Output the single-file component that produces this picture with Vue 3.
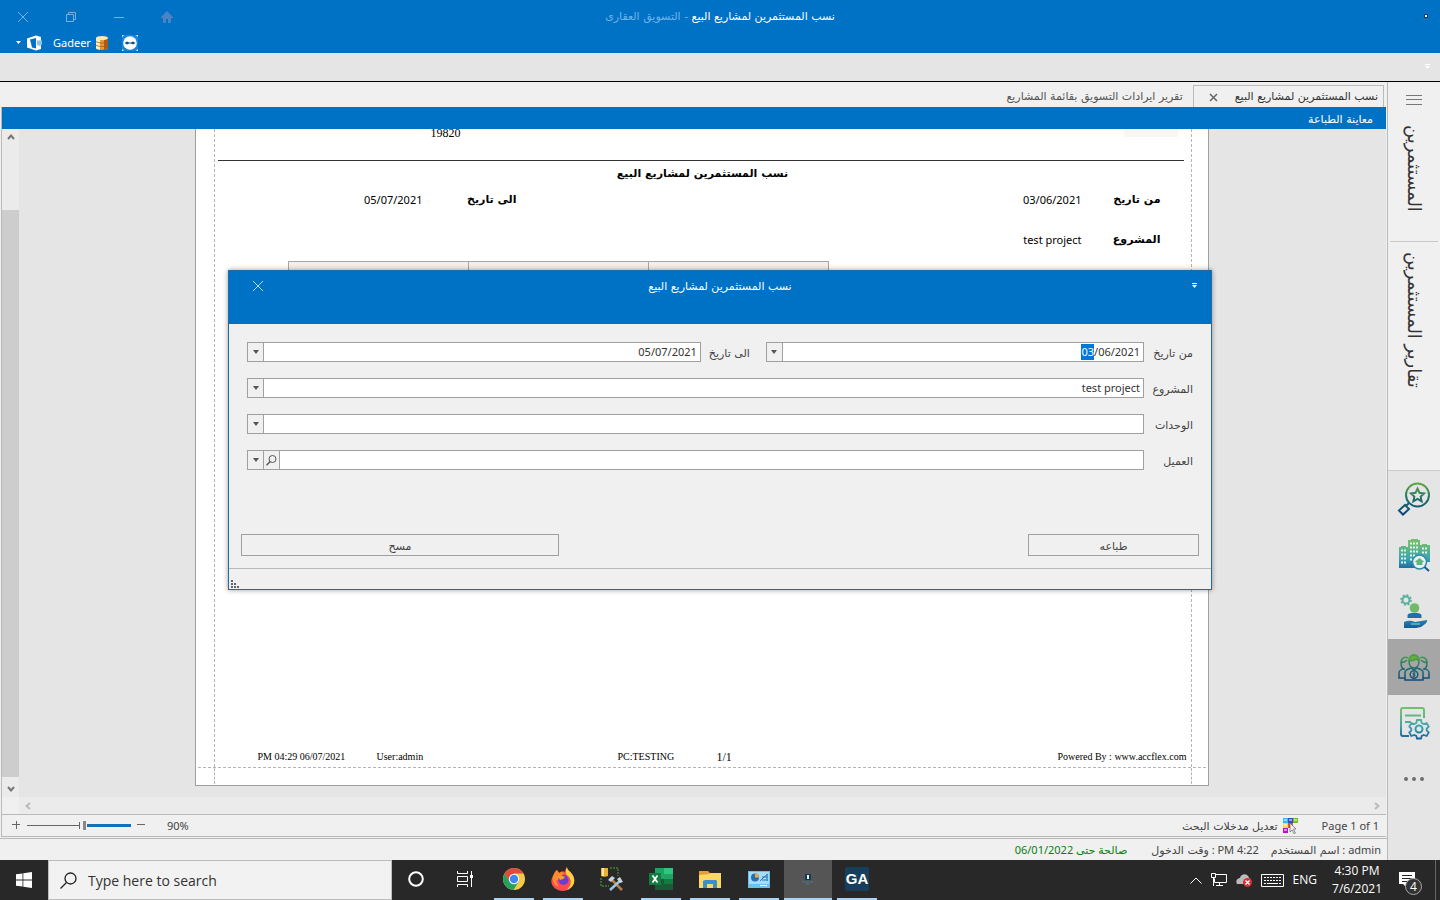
<script setup>
import { ref, onMounted } from "vue";

const fromDate = ref("03/06/2021");
const toDate = ref("05/07/2021");
const project = ref("test project");
const unit = ref("");
const client = ref("");
const fromInput = ref(null);
const zoom = ref(90);

const clearForm = () => {
  project.value = "";
  unit.value = "";
  client.value = "";
};

const printReport = () => {
  window.print();
};

// the day part is selected first, like in the desktop date editor
onMounted(() => {
  fromInput.value.focus();
  fromInput.value.setSelectionRange(0, 2);
});
</script>

<template>
  <div class="screen">
    <div class="desktop">
      <header class="titlebar">
        <div class="title-row">
          <div class="window-buttons">
            <button aria-label="Close">
              <svg width="12" height="12" viewBox="0 0 12 12"><path d="M1 1l10 10M11 1L1 11" /></svg>
            </button>
            <button aria-label="Restore">
              <svg width="12" height="12" viewBox="0 0 12 12"><path d="M1.500 3.500h7v7h-7zM3.500 3.500v-2h7v7h-2" /></svg>
            </button>
            <button aria-label="Minimize">
              <svg width="12" height="12" viewBox="0 0 12 12"><path d="M1 6.500h10" /></svg>
            </button>
            <button aria-label="Home">
              <svg width="12" height="12" viewBox="0 0 12 12"><path class="home" d="M6 0L12 6v1h-2v5H7V8H5v4H2V7H0V6z" /></svg>
            </button>
          </div>
          <h1 dir="rtl">نسب المستثمرين لمشاريع البيع <span>- التسويق العقارى</span></h1>
          <svg class="app-mark" width="8" height="6" viewBox="0 0 8 6"><path d="M2 0h4v4H2z" fill="#123f63" /><path d="M3 1h2v2H3z" fill="#fff" /><path d="M0 5.500h7" stroke="#2b6fa5" /></svg>
        </div>
        <div class="quick-row">
          <svg width="6" height="4" viewBox="0 0 6 4"><path d="M0 0h5L2.500 3z" fill="#fff" /></svg>
          <svg width="16" height="16" viewBox="0 0 16 16">
            <path d="M0 3.500L9 .5 14 2v12l-5 1.500L0 12.500z" fill="#fff" />
            <path d="M3 4.500l6-1.500v10.500L5 12.500z" fill="#0072c6" />
            <path d="M10 5.500h5v4l-2 1.500-3-1z" fill="#8cc2ea" />
          </svg>
          <span class="user">Gadeer</span>
          <svg width="12" height="14" viewBox="0 0 12 14">
            <path d="M0 2v10c0 2.500 12 2.500 12 0V2z" fill="#e59a3c" />
            <path d="M0 2v10c0 1 2 1.600 4 1.800V2z" fill="#fff0c0" />
            <path d="M8 2v11.700c2-.2 4-.8 4-1.700V2z" fill="#b8560f" />
            <ellipse cx="6" cy="2" rx="6" ry="2" fill="#ffe9ae" />
            <path d="M0 5.500c2 2 10 2 12 0M0 9c2 2 10 2 12 0" fill="none" stroke="#a65f17" stroke-width=".8" />
          </svg>
          <svg width="16" height="16" viewBox="0 0 16 16">
            <path d="M0 0h16v16H0z" fill="#1687e0" />
            <path d="M0 2V0h2M14 0h2v2M16 14v2h-2M2 16H0v-2" fill="none" stroke="#fff" />
            <circle cx="8" cy="8" r="6.800" fill="#fff" />
            <path d="M2.500 8L5 6.500l2 1h2l2-1L13.500 8 11 9.500l-2-1H7l-2 1z" fill="#0d4f8c" />
          </svg>
        </div>
      </header>

      <div class="ribbon">
        <svg width="6" height="6" viewBox="0 0 6 6"><path d="M0 .5h5" stroke="#fff" /><path d="M0 2h5L2.500 5z" fill="#fff" /></svg>
      </div>

      <div class="workspace">
        <main class="content">
          <nav class="tabs">
            <button class="tab" dir="rtl">تقرير ايرادات التسويق بقائمة المشاريع</button>
            <button class="tab active">
              <svg width="9" height="9" viewBox="0 0 9 9"><path d="M1 1l7 7M8 1L1 8" stroke="#666" stroke-width="1.500" /></svg>
              <span dir="rtl">نسب المستثمرين لمشاريع البيع</span>
            </button>
          </nav>

          <section class="preview">
            <h2 dir="rtl">معاينة الطباعة</h2>
            <div class="viewer">
              <div class="v-scroll">
                <svg width="8" height="6" viewBox="0 0 8 6"><path d="M1 5l3-3.500L7 5" /></svg>
                <div class="thumb"></div>
                <svg width="8" height="6" viewBox="0 0 8 6"><path d="M1 1l3 3.500L7 1" /></svg>
              </div>
              <div class="canvas">
                <article class="paper">
                  <div class="sheet">
                    <div class="report-head"><span>19820</span><i></i></div>
                    <h3 dir="rtl">نسب المستثمرين لمشاريع البيع</h3>
                    <dl class="criteria">
                      <div class="to">
                        <dt dir="rtl">الى تاريخ</dt>
                        <dd>05/07/2021</dd>
                      </div>
                      <div>
                        <dt dir="rtl">من تاريخ</dt>
                        <dd>03/06/2021</dd>
                      </div>
                      <div class="project">
                        <dt dir="rtl">المشروع</dt>
                        <dd>test project</dd>
                      </div>
                    </dl>
                    <div class="report-table"><i v-for="n in 3" :key="n"></i></div>
                    <footer class="report-foot">
                      <span>PM 04:29 06/07/2021</span>
                      <span>User:admin</span>
                      <span>PC:TESTING</span>
                      <span class="page-no">1/1</span>
                      <span>Powered By : www.accflex.com</span>
                    </footer>
                  </div>
                  <div class="bottom-margin"></div>
                </article>
              </div>
            </div>
            <div class="h-scroll">
              <svg width="6" height="8" viewBox="0 0 6 8"><path d="M5 1L1.500 4 5 7" /></svg>
              <svg width="6" height="8" viewBox="0 0 6 8"><path d="M1 1l3.500 3L1 7" /></svg>
            </div>
            <div class="zoom-bar">
              <button class="step" aria-label="Zoom in">
                <svg width="8" height="8" viewBox="0 0 8 8"><path d="M0 3.500h8M4.500 0v8" /></svg>
              </button>
              <input v-model="zoom" class="slider" dir="rtl" type="range" min="10" max="190" aria-label="Zoom" />
              <button class="step" aria-label="Zoom out">
                <svg width="8" height="8" viewBox="0 0 8 8"><path d="M0 3.500h8" /></svg>
              </button>
              <span class="percent">{{ zoom }}%</span>
              <button class="edit-search">
                <span dir="rtl">تعديل مدخلات البحث</span>
                <svg width="16" height="16" viewBox="0 0 16 16">
                  <path d="M0 0h5v5H0z" fill="#39b6ee" />
                  <path d="M5 0h5v5H5z" fill="#3948b8" />
                  <path d="M10 0h5v5h-5z" fill="#79bd1d" />
                  <path d="M0 5h5v5H0z" fill="#ffd84a" />
                  <path d="M5 5h5v5H5z" fill="#e8502e" />
                  <path d="M0 10h5v5H0z" fill="#b414d2" />
                  <path d="M1 1h3v2H1zM6 1h3v2H6zM11 1h3v2h-3zM1 6h3v2H1zM1 11h3v2H1z" fill="#fff" opacity=".5" />
                  <path d="M7 5l6 6-2.500.2 2 3.800-1.500.8-1.800-3.800L7 14z" fill="#eee" stroke="#666" stroke-width=".7" />
                </svg>
              </button>
              <span class="page-count">Page 1 of 1</span>
            </div>
          </section>

          <footer class="status">
            <span class="valid" dir="rtl">صالحة حتى 06/01/2022</span>
            <span><bdi>وقت الدخول</bdi> : PM 4:22</span>
            <span class="who"><bdi>اسم المستخدم</bdi> : admin</span>
          </footer>
        </main>

        <aside class="sidebar">
          <button class="menu" aria-label="Menu">
            <svg width="16" height="10" viewBox="0 0 16 10"><path d="M0 .5h16M0 4.500h16M0 9.500h16" stroke="#777" /></svg>
          </button>
          <a class="side-link first" href="#" dir="rtl">المستثمرين</a>
          <a class="side-link" href="#" dir="rtl">تقارير المستثمرين</a>
          <div class="modules">
            <button aria-label="Favorites">
              <svg width="34" height="34" viewBox="0 0 34 34" fill="none" stroke="url(#gb)" stroke-width="2">
                <defs>
                  <linearGradient id="gb" x1="0" y1="0" x2="0" y2="34" gradientUnits="userSpaceOnUse">
                    <stop offset="0" stop-color="#5fae3c" />
                    <stop offset=".5" stop-color="#20706c" />
                    <stop offset="1" stop-color="#0d3f7c" />
                  </linearGradient>
                  <linearGradient id="lb" x1="0" y1="0" x2="0" y2="34" gradientUnits="userSpaceOnUse">
                    <stop offset=".15" stop-color="#70bf70" />
                    <stop offset=".6" stop-color="#3fa4b0" />
                    <stop offset="1" stop-color="#105a9c" />
                  </linearGradient>
                </defs>
                <circle cx="20.500" cy="13" r="11.500" />
                <path d="M20.500 6.500l2 4.300 4.600.6-3.400 3.200.9 4.600-4.100-2.300-4.100 2.300.9-4.600-3.400-3.200 4.600-.6z" />
                <path d="M12 21l-3 3M8 23l4 4-6 5.500-4-4z" />
              </svg>
            </button>
            <button aria-label="Projects">
              <svg width="34" height="34" viewBox="0 0 34 34">
                <path d="M2 9h2V8h5v1h2V2h3V1h7v1h2v5h2V6h5v1h3v17H22v6H2z" fill="url(#lb)" />
                <path d="M4 12.500h6M4 16.500h6M4 20.500h6M4 24.500h6M13 5.500h9M13 9.500h9M13 13.500h9M13 17.500h5M13 21.500h2M25 10.500h6M25 14.500h6" stroke="#e5f3ee" stroke-width="2" stroke-dasharray="2 1" />
                <circle cx="22.500" cy="24" r="7" fill="#eaf4f2" stroke="#2d8ab0" stroke-width="1.500" />
                <path d="M27.500 29l4.500 4" stroke="#105a9c" stroke-width="2" />
                <path d="M17.500 24l5-4 5 4h-2v3h-6v-3z" fill="#62b580" />
              </svg>
            </button>
            <button aria-label="Services">
              <svg width="34" height="34" viewBox="0 0 34 34" fill="none">
                <circle cx="9" cy="6" r="3.500" stroke="#58b596" stroke-width="2" />
                <circle cx="9" cy="6" r="5" stroke="#58a9a8" stroke-width="1.500" stroke-dasharray="2 1.900" />
                <circle cx="17.500" cy="14" r="4.800" fill="#70bb68" />
                <path d="M10.500 24v-2c0-3 3-3 7-3s7 0 7 3v2z" fill="#1e70ab" />
                <path d="M7 28c4-2 8-1 11 0l12-2c1 2-3 5-6 7-7 2-11 1-17 1z" fill="url(#lb)" />
                <path d="M14 30h9" stroke="#9cd5cb" />
              </svg>
            </button>
            <button class="current" aria-label="Investors">
              <svg width="34" height="34" viewBox="0 0 34 34" fill="none" stroke="url(#gb)" stroke-width="1.500">
                <path d="M12 11c0-8 10-8 10 0 0 4-2 7-5 7s-5-3-5-7z" />
                <path d="M12 11c0-8 10-8 10 0l-3-2c-2 2-5 2-7 2z" fill="#5fae3c" stroke="#4c9a4a" />
                <path d="M11 8c-3-2-7 0-7 5 0 4 2 6 4 6M23 8c3-2 7 0 7 5 0 4-2 6-4 6M4 12c2 1 4 0 6-2M30 12c-2 1-4 0-6-2" />
                <path d="M8 28H2v-5c0-2 2-4 5-4M26 28h6v-5c0-2-2-4-5-4M8 30v-8c0-2 3-3 6-4l3 2 3-2c3 1 6 2 6 4v8z" />
                <circle cx="17" cy="24.500" r="3.800" />
                <path d="M18.500 23h-2l-.8 1 2.500 1-.7 1.300h-2M17 21.500v6" stroke-width="1" />
              </svg>
            </button>
            <button aria-label="Reports">
              <svg width="34" height="34" viewBox="0 0 34 34" fill="none" stroke="url(#lb)" stroke-width="2">
                <path d="M27 12V4c0-2-1-2-2-2H6C5 2 4 3 4 4v24c0 2 1 2 2 2h6" />
                <path d="M8 9.500h16M8 16h6" />
                <circle cx="22" cy="23" r="3.500" />
                <path d="M20 14h4l.7 3 2 1 3-1 2 3.500-2 2v2l2 2-2 3.500-3-1-2 1-.7 2.500h-4l-.7-2.500-2-1-3 1-2-3.500 2-2v-2l-2-2 2-3.500 3 1 2-1z" stroke-width="1.800" />
              </svg>
            </button>
            <button aria-label="More">
              <svg width="20" height="4" viewBox="0 0 20 4" fill="#6e6e6e"><circle cx="2" cy="2" r="2" /><circle cx="10" cy="2" r="2" /><circle cx="18" cy="2" r="2" /></svg>
            </button>
          </div>
        </aside>
      </div>

      <div class="overlay">
        <form class="dialog" role="dialog" aria-labelledby="dialog-title" @submit.prevent="printReport">
          <header class="dialog-head">
            <button type="button" aria-label="Close">
              <svg width="12" height="12" viewBox="0 0 12 12"><path d="M1 1l10 10M11 1L1 11" /></svg>
            </button>
            <h2 id="dialog-title" dir="rtl">نسب المستثمرين لمشاريع البيع</h2>
            <svg width="6" height="6" viewBox="0 0 6 6"><path d="M0 .5h5" stroke="#fff" /><path d="M0 2h5L2.500 5z" fill="#fff" /></svg>
          </header>
          <div class="fields">
            <div class="dates">
              <div class="combo">
                <button type="button" class="drop" aria-label="Open calendar"></button>
                <input id="to-date" v-model="toDate" type="text" />
              </div>
              <label for="to-date" dir="rtl">الى تاريخ</label>
              <div class="combo from">
                <button type="button" class="drop" aria-label="Open calendar"></button>
                <input id="from-date" ref="fromInput" v-model="fromDate" type="text" />
              </div>
            </div>
            <label for="from-date" dir="rtl">من تاريخ</label>

            <div class="combo">
              <span class="drop over"></span>
              <select id="project" v-model="project">
                <option value=""></option>
                <option value="test project">test project</option>
              </select>
            </div>
            <label for="project" dir="rtl">المشروع</label>

            <div class="combo">
              <span class="drop over"></span>
              <select id="unit" v-model="unit">
                <option value=""></option>
              </select>
            </div>
            <label for="unit" dir="rtl">الوحدات</label>

            <div class="combo">
              <button type="button" class="drop" aria-label="Open list"></button>
              <button type="button" class="find" aria-label="Search">
                <svg width="11" height="11" viewBox="0 0 11 11"><circle cx="6.500" cy="4" r="3.500" /><path d="M4.200 6.500L.5 10.200" stroke-width="1.500" /></svg>
              </button>
              <input id="client" v-model="client" type="text" />
            </div>
            <label for="client" dir="rtl">العميل</label>
          </div>
          <div class="actions">
            <button type="button" class="clear" dir="rtl" @click="clearForm">مسح</button>
            <button type="submit" class="print" dir="rtl">طباعه</button>
          </div>
          <div class="dialog-foot">
            <svg width="8" height="8" viewBox="0 0 8 8" fill="#666"><path d="M0 0h2v2H0zM0 3h2v2H0zM3 3h2v2H3zM0 6h2v2H0zM3 6h2v2H3zM6 6h2v2H6z" /></svg>
          </div>
        </form>
      </div>
    </div>

    <div class="taskbar">
      <button class="start" aria-label="Start">
        <svg width="16" height="16" viewBox="0 0 16 16" fill="#fff"><path d="M0 2.300L6.500 1.400v6.200H0zM7.300 1.300L16 0v7.600H7.300zM0 8.400h6.500v6.200L0 13.700zM7.300 8.400H16V16l-8.700-1.300z" /></svg>
      </button>
      <label class="search">
        <svg width="17" height="17" viewBox="0 0 17 17" fill="none" stroke="#222" stroke-width="1.300"><circle cx="10.500" cy="6.500" r="5.500" /><path d="M6.500 10.500L.5 16.500" /></svg>
        <input type="text" placeholder="Type here to search" aria-label="Search" />
      </label>
      <div class="apps">
        <button aria-label="Cortana">
          <svg width="16" height="16" viewBox="0 0 16 16"><circle cx="8" cy="8" r="6.800" fill="none" stroke="#fff" stroke-width="2" /></svg>
        </button>
        <button aria-label="Task view">
          <svg width="16" height="16" viewBox="0 0 16 16" fill="none" stroke="#fff"><path d="M.5 0v2.500h10V0M.5 5.500h10v5H.5zM.5 16v-2.500h10V16M14.500 0v16" /><path d="M13 4h3v3h-3z" fill="#fff" stroke="none" /></svg>
        </button>
        <button class="open" aria-label="Chrome">
          <svg width="22" height="22" viewBox="0 0 22 22">
            <circle cx="11" cy="11" r="11" fill="#f6c945" />
            <path d="M1.500 5.500A11 11 0 0 1 20.500 5.500H11L6.200 13.700z" fill="#dc4c3e" />
            <path d="M1.500 5.500A11 11 0 0 0 10.500 22l5.200-8.500H6.300z" fill="#23a15d" />
            <circle cx="11" cy="11" r="5.200" fill="#fff" /><circle cx="11" cy="11" r="4.200" fill="#4086f4" />
          </svg>
        </button>
        <button class="open" aria-label="Firefox">
          <svg width="24" height="24" viewBox="0 0 24 24">
            <path d="M4 5l2-2 2 3c2-2 5-2 6-1 0-2 1-4 2-5 0 3 3 4 5 7 6 8-1 17-9 17S-3 17 2 9z" fill="#ff4a4f" />
            <path d="M16 0c0 3 3 4 5 7 5 7 1 14-5 16 5-6 5-11 0-15-2-2-1-6 0-8z" fill="#ffd43a" />
            <path d="M4 5l2-2 2 3c2-1 4-1 5 0l-4 5-4 3 3 6C2 18 1 13 2 9z" fill="#ff8b2b" />
            <circle cx="12.500" cy="13" r="5" fill="#6a3ed1" /><path d="M7 9c3-1 5 0 7 1-1 2-3 2-5 3z" fill="#ff9a2e" />
          </svg>
        </button>
        <button aria-label="Database tools">
          <svg width="24" height="24" viewBox="0 0 24 24" fill="none">
            <path d="M10 1h8v8M1 11v8h8" stroke="#4fa540" stroke-dasharray="2 1" />
            <path d="M1 1h7v8c-2 1-5 1-7 0z" fill="#e9b22b" /><path d="M2 1h2v8H2z" fill="#ffe9a0" />
            <path d="M10 11l12 12" stroke="#b87d45" stroke-width="2.500" /><path d="M21 13l-11 10" stroke="#9cc5df" stroke-width="2.500" />
            <path d="M8 13l4-4 3 2-4 4zM17 12l3-2 3 5-3 1z" fill="#c5d3dc" />
          </svg>
        </button>
        <button class="open" aria-label="Excel">
          <svg width="24" height="22" viewBox="0 0 24 22">
            <path d="M6 0h9v6H6z" fill="#21a366" /><path d="M15 0h9v6h-9z" fill="#33c481" /><path d="M6 6h18v5H6z" fill="#21a366" />
            <path d="M6 11h18v11H6z" fill="#185c37" /><path d="M15 11h9v5h-9z" fill="#107c41" /><path d="M0 5h12v12H0z" fill="#107c41" />
            <path d="M3.500 7.500l5 7M8.500 7.500l-5 7" stroke="#fff" stroke-width="1.800" />
          </svg>
        </button>
        <button class="open" aria-label="Files">
          <svg width="22" height="19" viewBox="0 0 22 19">
            <path d="M0 1h9l2 2h11v15H0z" fill="#e2a32d" /><path d="M0 5l11-1V3h11v15H0z" fill="#fcd667" />
            <path d="M4 18v-7l2-1h11l1 1v7h-4v-4H8v4z" fill="#3a8fd0" />
          </svg>
        </button>
        <button class="open" aria-label="Control panel">
          <svg width="22" height="17" viewBox="0 0 22 17">
            <path d="M0 0h22v17H0z" fill="#6dbfeb" /><path d="M1 1h20v12H1z" fill="#a5dcfa" />
            <circle cx="7" cy="6.500" r="4" fill="#2370b4" /><path d="M7 6.500V2.500a4 4 0 0 1 4 4z" fill="#f0a83b" />
            <path d="M12 10l3-3 5-4M14 6h6M14 9h6M19 3v7" stroke="#2a79b8" fill="none" /><path d="M3 14.500h8" stroke="#eaad3b" /><path d="M12 14.500h7" stroke="#fff" />
          </svg>
        </button>
        <button class="open selected" aria-label="AccFlex">
          <svg width="14" height="12" viewBox="0 0 14 12"><path d="M4 1h6v6H4z" fill="#123b54" /><path d="M6 2h2v4H6z" fill="#e4f0f6" /><path d="M1 9h12M5 11h4" stroke="#407fa3" stroke-dasharray="3 1" /></svg>
        </button>
        <button class="open" aria-label="GA">
          <span class="ga">GA</span>
        </button>
      </div>
      <div class="tray">
        <svg width="12" height="7" viewBox="0 0 12 7"><path d="M.5 6.500L6 1l5.500 5.500" /></svg>
        <svg width="16" height="14" viewBox="0 0 16 14"><path d="M5 1.500h10.500v8H3.500v-4M8.500 9.500v3M5 12.500h7M.5 .5h4v4h-4zM2.500 5v8" /></svg>
        <svg width="16" height="14" viewBox="0 0 16 14">
          <path d="M1 11C-1 7 2 5 4 5c1-5 8-5 9 0 3 1 3 5 1 6z" fill="#bbb" stroke="none" />
          <circle cx="11.500" cy="9.500" r="4.500" fill="#d32f36" stroke="none" /><path d="M9.500 7.500l4 4M13.500 7.500l-4 4" stroke-width="1.400" />
        </svg>
        <svg width="23" height="13" viewBox="0 0 23 13"><path d="M.5 .5h22v12H.5z" /><path d="M3 3.500h17M3 6.500h17" stroke-dasharray="2 1" /><path d="M3 9.500h2M6 9.500h11M18 9.500h2" /></svg>
        <span>ENG</span>
        <div class="clock">
          <span>4:30 PM</span>
          <span>7/6/2021</span>
        </div>
        <button class="notices" aria-label="Notifications">
          <svg width="16" height="16" viewBox="0 0 16 16"><path d="M0 0h16v12H8v4l-4-4H0z" fill="#fff" stroke="none" /><path d="M3 3.500h10M3 6.500h10M3 9.500h6" stroke="#262626" /></svg>
          <span class="count">4</span>
        </button>
      </div>
    </div>
  </div>
</template>

<style>
body {
  margin: 0;
}
</style>

<style scoped>
* {
  box-sizing: border-box;
}
.screen {
  display: flex;
  flex-direction: column;
  min-height: 100vh;
  font-family: "Noto Sans", "DejaVu Sans", sans-serif;
  font-size: 11px;
  line-height: 16px;
  color: #444;
}
[dir="rtl"],
bdi {
  font-family: "DejaVu Sans", "Noto Sans", sans-serif;
}
button {
  padding: 0;
  border: 0;
  background: none;
  font: inherit;
  color: inherit;
}
h1,
h2,
h3,
dl,
dd {
  margin: 0;
  font-size: 11px;
  font-weight: normal;
}
svg {
  flex: none;
  display: block;
}
.desktop {
  position: relative;
  flex: 1;
  display: flex;
  flex-direction: column;
  background: #f0f0f0;
}

/* main window title */
.titlebar {
  height: 53px;
  background: #0072c6;
  color: #fff;
}
.title-row {
  display: grid;
  grid-template-columns: 1fr auto 1fr;
  align-items: center;
  height: 33px;
  padding: 0 10px 0 17px;
}
h1 {
  margin-right: 7px;
}
.window-buttons {
  display: flex;
  gap: 36px;
}
.window-buttons path {
  fill: none;
  stroke: #73b2e3;
}
.window-buttons .home {
  fill: #4b83c4;
  stroke: none;
}
h1 span {
  color: #6fb3ea;
}
.app-mark {
  justify-self: end;
}
.quick-row {
  display: flex;
  align-items: center;
  height: 20px;
  padding-left: 16px;
  gap: 5px;
}
.user {
  margin-left: 5px;
}
.quick-row svg:last-child {
  margin-left: 9px;
}
.ribbon {
  display: flex;
  align-items: center;
  justify-content: flex-end;
  height: 29px;
  padding-right: 9px;
  background: #e5e5e5;
  border-bottom: 1px solid #000;
}

.workspace {
  flex: 1;
  display: flex;
}
.content {
  flex: 1;
  display: flex;
  flex-direction: column;
  min-width: 0;
}
.tabs {
  display: flex;
  justify-content: flex-end;
  align-items: flex-end;
  height: 25px;
  padding-right: 3px;
}
.tab {
  display: flex;
  align-items: center;
  height: 22px;
  padding: 2px 10px 0;
  color: #555;
}
.tab.active {
  gap: 17px;
  padding: 1px 5px 0 15px;
  border: 1px solid #bbb;
  border-bottom: 0;
  color: #333;
}
.preview {
  flex: 1;
  display: flex;
  flex-direction: column;
  margin: 0 1px 1px;
  border: 1px solid #b9b9b9;
  border-width: 0 0 1px 1px;
}
.preview h2 {
  height: 22px;
  padding: 5px 13px 0;
  background: #0072c6;
  color: #fff;
}
.viewer {
  flex: 1;
  display: flex;
  background: #e5e5e5;
}
.v-scroll {
  display: flex;
  flex-direction: column;
  align-items: center;
  justify-content: space-between;
  width: 17px;
  padding: 5px 0;
  background: #ebebeb;
}
.v-scroll path,
.h-scroll path {
  fill: none;
  stroke: #777;
  stroke-width: 2;
}
.thumb {
  flex: 1;
  align-self: stretch;
  margin: 70px 0 9px;
  background: #cdcdcd;
}
.canvas {
  flex: 1;
  display: flex;
  justify-content: center;
  padding: 0 2px 11px 0;
}
.paper {
  display: flex;
  flex-direction: column;
  width: 1014px;
  padding: 0 2px;
  background: #fff;
  border: 1px solid #a0a0a0;
  border-top: 0;
  color: #000;
}
.sheet {
  flex: 1;
  display: flex;
  flex-direction: column;
  margin: 0 14px 0 16px;
  border: 1px dashed #b4b4b4;
  border-width: 0 1px;
}
.bottom-margin {
  height: 18px;
  border-top: 1px dashed #b4b4b4;
}
.bottom-margin::before {
  content: "";
  display: block;
  height: 16px;
  margin: 0 14px 0 16px;
  border: 1px dashed #b4b4b4;
  border-width: 0 1px;
}
.report-head {
  display: flex;
  justify-content: space-between;
  height: 32px;
  margin: 0 7px 0 3px;
  padding: 0 6px 0 213px;
  border-bottom: 1px solid #333;
  font: 12px/8px "Liberation Serif", serif;
}
.report-head i {
  width: 54px;
  height: 8px;
  background: #f7f7f7;
}
h3 {
  margin-top: 4px;
  font: bold 11px/18px "DejaVu Sans Condensed", "DejaVu Sans", sans-serif;
  text-align: center;
}
.criteria {
  display: grid;
  grid-template-columns: 1fr 1fr;
  row-gap: 24px;
  margin-top: 9px;
  padding-right: 30px;
}
.criteria div {
  display: flex;
  flex-direction: row-reverse;
}
.criteria .to {
  padding-right: 171px;
}
.criteria .project {
  grid-column: 2;
}
.criteria dt {
  width: 79px;
  font-weight: bold;
}
.criteria .to dt {
  width: 94px;
}
.report-table {
  display: flex;
  height: 24px;
  margin: 13px 0 0 73px;
}
.report-table i {
  width: 180px;
  background: #f0f0f0;
  border: 1px solid #a8a8a8;
  border-right-width: 0;
}
.report-table i:last-child {
  width: 181px;
  border-right-width: 1px;
}
.report-foot {
  display: grid;
  grid-template-columns: 119px 241px 99px 1fr auto;
  align-items: end;
  margin-top: auto;
  padding: 0 4px 2px 43px;
  font: 10px/16px "Liberation Serif", serif;
}
.page-no {
  font-size: 12px;
}
.h-scroll {
  display: flex;
  align-items: center;
  justify-content: space-between;
  height: 17px;
  margin-left: 17px;
  padding: 0 6px;
  background: #ebebeb;
}
.h-scroll path {
  stroke: #bbb;
}
.zoom-bar {
  display: flex;
  align-items: center;
  height: 22px;
  padding: 0 7px 0 10px;
  border-top: 1px solid #b9b9b9;
}
.step path {
  fill: none;
  stroke: #666;
}
.step,
.slider {
  margin-bottom: 2px;
}
.slider {
  appearance: none;
  width: 104px;
  height: 12px;
  margin-left: 7px;
  margin-right: 6px;
  background: linear-gradient(90deg, #666 0 52px, transparent 52px) 0 5px / 100% 1px no-repeat,
    linear-gradient(#1170b8, #1170b8) 60px 4px / 44px 3px no-repeat,
    linear-gradient(#666, #666) 52px 2px / 1px 7px no-repeat;
}
.slider::-webkit-slider-thumb {
  appearance: none;
  width: 3px;
  height: 9px;
  margin-top: -1px;
  background: #888;
}
.percent {
  margin-left: 22px;
}
.edit-search {
  display: flex;
  align-items: center;
  gap: 5px;
  margin-left: auto;
}
.edit-search span {
  padding-top: 2px;
}
.page-count {
  margin-left: 23px;
}
.status {
  display: flex;
  justify-content: flex-end;
  align-items: center;
  height: 22px;
  padding: 1px 6px 0 0;
  border-top: 1px solid #b9b9b9;
}
.valid {
  margin-right: 24px;
  font-family: "Noto Sans", "DejaVu Sans", sans-serif;
  color: #0b7d12;
}
.who {
  margin-left: 12px;
}

/* right navigation */
.sidebar {
  display: flex;
  flex-direction: column;
  width: 53px;
  border-left: 1px solid #b9b9b9;
}
.menu {
  display: flex;
  justify-content: center;
  padding: 13px 0 18px;
}
.side-link {
  margin: 0 2px;
  padding: 10px 12px 0;
  writing-mode: vertical-rl;
  text-align: left;
  font-size: 18px;
  line-height: 24px;
  color: #333;
  text-decoration: none;
}
.side-link.first {
  height: 119px;
  padding-top: 2px;
  border-bottom: 1px solid #c8c8c8;
}
.modules {
  margin-top: auto;
  height: 390px;
  background: #e5e5e5;
  border-top: 1px solid #ccc;
}
.modules button {
  display: flex;
  align-items: center;
  justify-content: center;
  width: 100%;
  height: 56px;
}
.modules .current {
  background: #a6a6a6;
}

/* search dialog */
.overlay {
  position: absolute;
  inset: 0;
  display: flex;
  align-items: center;
  justify-content: center;
}
.dialog {
  width: 984px;
  background: #f0f0f0;
  border: 1px solid #1b6ca8;
  box-shadow: 0 0 5px rgba(0, 0, 0, 0.4);
}
.dialog-head {
  display: grid;
  grid-template-columns: 1fr auto 1fr;
  align-items: start;
  height: 53px;
  padding: 8px 13px 0 23px;
  background: #0072c6;
  color: #fff;
}
.dialog-head h2 {
  margin-right: 10px;
}
.dialog-head button {
  justify-self: start;
  margin-top: 1px;
}
.dialog-head button path {
  stroke: #b9dcf5;
}
.dialog-head > svg {
  justify-self: end;
  margin-top: 4px;
}
.fields {
  display: grid;
  grid-template-columns: 1fr 42px;
  gap: 16px 7px;
  align-items: center;
  padding: 18px 18px 0;
}
.fields label {
  padding-top: 4px;
  white-space: nowrap;
}
.dates {
  display: flex;
  align-items: center;
}
.dates .combo {
  flex: 454;
}
.dates .from {
  flex: 378;
}
.dates label {
  margin: 0 16px 0 8px;
}
.combo {
  position: relative;
  display: flex;
  height: 20px;
  background: #fff;
  border: 1px solid #a0a0a0;
}
.combo input,
.combo select {
  flex: 1;
  appearance: none;
  min-width: 0;
  padding: 0 3px;
  border: 0;
  border-radius: 0;
  outline: 0;
  background: none;
  font: inherit;
  color: #333;
  text-align: right;
  text-align-last: right;
}
.combo ::selection {
  background: #0078d7;
  color: #fff;
}
.drop,
.find {
  display: flex;
  align-items: center;
  justify-content: center;
  width: 16px;
  background: #f0f0f0;
  border-right: 1px solid #a0a0a0;
}
.drop::before {
  content: "";
  border: 3px solid transparent;
  border-top: 4px solid #555;
  border-bottom: 0;
}
.over {
  position: absolute;
  inset: 0 auto 0 0;
  pointer-events: none;
}
.find svg {
  fill: none;
  stroke: #555;
}
.actions {
  display: flex;
  justify-content: space-between;
  margin-top: 64px;
  padding: 0 12px;
}
.actions button {
  width: 171px;
  height: 22px;
  padding-top: 4px;
  border: 1px solid #a0a0a0;
}
.actions .clear {
  width: 318px;
}
.dialog-foot {
  display: flex;
  align-items: flex-end;
  height: 21px;
  margin-top: 12px;
  padding: 0 2px 1px;
  border-top: 1px solid #b9b9b9;
}

/* windows taskbar */
.taskbar {
  display: flex;
  height: 40px;
  background: #282828;
  color: #fff;
  font: 12px/18px "Open Sans", "Noto Sans", sans-serif;
}
.start {
  display: flex;
  align-items: center;
  justify-content: center;
  width: 48px;
}
.search {
  display: flex;
  align-items: center;
  gap: 11px;
  width: 344px;
  padding: 0 11px;
  background: #f2f2f2;
  border: 1px solid #bbb;
}
.search input {
  flex: 1;
  padding: 2px 0 0;
  border: 0;
  background: none;
  font: 14px/20px "Open Sans", "Noto Sans", sans-serif;
}
.search input::placeholder {
  color: #333;
}
.apps {
  display: flex;
  gap: 1px;
}
.apps button {
  display: flex;
  align-items: center;
  justify-content: center;
  width: 48px;
  border-bottom: 2px solid transparent;
}
.apps .open {
  background: linear-gradient(#a8d4f8, #a8d4f8) center bottom / 40px 2px no-repeat border-box;
}
.apps .selected {
  background: #555;
  border-bottom-color: #a8d4f8;
}
.ga {
  width: 24px;
  height: 24px;
  background: #173f5b;
  border-radius: 2px;
  font: bold 15px/24px "Liberation Sans Narrow", "Liberation Sans", sans-serif;
}
.tray {
  display: flex;
  align-items: center;
  gap: 9px;
  margin-left: auto;
  padding-right: 4px;
}
.tray svg {
  fill: none;
  stroke: #fff;
}
.clock {
  display: flex;
  flex-direction: column;
  align-items: center;
  margin-left: 6px;
}
.notices {
  position: relative;
  align-self: stretch;
  width: 45px;
  padding-left: 8px;
  border-right: 1px solid #666;
}
.count {
  position: absolute;
  right: 13px;
  bottom: 5px;
  width: 17px;
  height: 17px;
  border: 1px solid #aaa;
  border-radius: 50%;
  background: #333;
  line-height: 15px;
}
</style>
